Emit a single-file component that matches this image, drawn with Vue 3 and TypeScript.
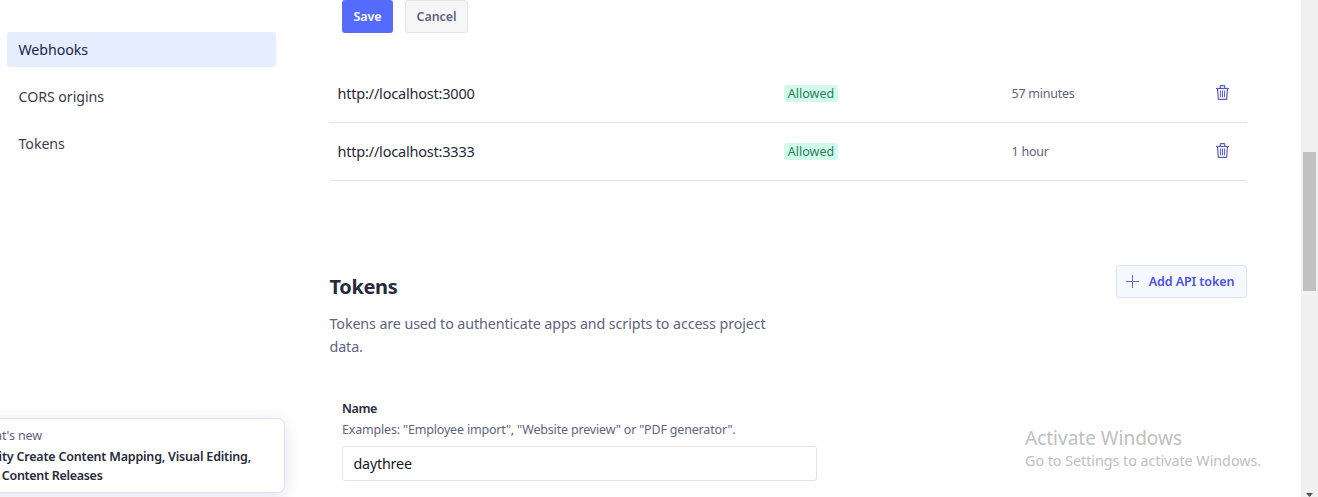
<script setup lang="ts">
interface Origin { url: string; age: string }

const navItems: string[] = ['Webhooks', 'CORS origins', 'Tokens']
const activeItem = 'Webhooks'
const origins: Origin[] = [
  { url: 'http://localhost:3000', age: '57 minutes' },
  { url: 'http://localhost:3333', age: '1 hour' },
]
const tokenName = 'daythree'
</script>

<template>
  <div class="page">
    <nav class="sidebar">
      <a v-for="item in navItems" :key="item" class="nav-item" :class="{ active: item === activeItem }">{{ item }}</a>
    </nav>

    <main class="content">
      <div class="actions">
        <button class="btn primary">Save</button>
        <button class="btn neutral">Cancel</button>
      </div>

      <div class="origins">
        <div v-for="o in origins" :key="o.url" class="row">
          <span class="url">{{ o.url }}</span>
          <span class="status"><span class="badge">Allowed</span></span>
          <span class="age">{{ o.age }}</span>
          <svg class="trash" width="13" height="15" viewBox="0 0 13 15" fill="none" stroke="#5a5cc4">
            <path d="M0 3.5H13" stroke-width="1.2" />
            <path d="M4.3 3V1.2Q4.3 0.6 4.9 0.6H8.1Q8.7 0.6 8.7 1.2V3" stroke-width="1.2" />
            <path d="M1.5 3.8L2.4 14.4H10.6L11.5 3.8" stroke-width="1.2" />
            <path d="M4.3 5.5L4.6 12.3M6.5 5.5V12.3M8.7 5.5L8.4 12.3" stroke-width="1" />
          </svg>
        </div>
      </div>

      <section class="tokens">
        <header class="tokens-head">
          <h2>Tokens</h2>
          <button class="btn add">
            <svg width="13" height="13" viewBox="0 0 13 13" stroke="#6a6cc9" stroke-width="1"><path d="M6.5 0V13M0 6.5H13" /></svg>
            <span>Add API token</span>
          </button>
        </header>
        <p class="intro">Tokens are used to authenticate apps and scripts to access project<br>data.</p>

        <form class="form">
          <label class="label">Name</label>
          <div class="hint">Examples: "Employee import", "Website preview" or "PDF generator".</div>
          <div class="input">{{ tokenName }}</div>
        </form>
      </section>
    </main>

    <div class="scrollbar">
      <div class="thumb"></div>
      <svg class="arrow" width="7" height="4" viewBox="0 0 7 4"><path d="M0 0H7L3.5 4Z" fill="#505050" /></svg>
    </div>

    <aside class="news">
      <div class="news-kicker">What's new</div>
      <div class="news-title">Sanity Create Content Mapping, Visual Editing,</div>
      <div class="news-title second">and Content Releases</div>
    </aside>

    <div class="watermark">
      <div class="wm-title">Activate Windows</div>
      <div class="wm-text">Go to Settings to activate Windows.</div>
    </div>
  </div>
</template>

<style>
body { margin: 0; overflow: hidden; background: #fff; }
</style>

<style scoped>
.page {
  position: relative;
  display: flex;
  width: 1318px;
  height: 497px;
  overflow: hidden;
  background: #fff;
  color: #272a3a;
  font-family: "Noto Sans", "Open Sans", sans-serif;
  white-space: nowrap;
}
* { box-sizing: border-box; }
.sidebar {
  display: flex;
  flex-direction: column;
  gap: 12px;
  width: 276px;
  padding: 32px 0 0 7px;
}
.nav-item {
  height: 35px;
  padding-left: 11.5px;
  border-radius: 3px;
  font-size: 14.2px;
  letter-spacing: -0.05px;
  line-height: 35px;
  color: #3b3d4e;
}
.nav-item.active { background: #e5edff; color: #1b1d4e; }
.content { width: 917px; margin-left: 54px; }
.actions { display: flex; gap: 12px; padding-left: 12px; }
.btn {
  display: flex;
  align-items: center;
  justify-content: center;
  height: 33px;
  padding: 0;
  border: 1px solid transparent;
  border-radius: 3px;
  font-family: inherit;
  font-size: 12.5px;
  font-weight: 600;
  letter-spacing: -0.08px;
}
.primary { width: 51px; background: #556bfc; color: #fff; }
.neutral { width: 63px; background: #f6f6f8; border-color: #e3e4e8; color: #5f6380; }
.origins { margin-top: 32px; }
.row {
  display: grid;
  grid-template-columns: 446.5px 227.5px 204px 13px;
  align-items: center;
  height: 58px;
  padding-left: 7.5px;
  border-bottom: 1px solid #e3e4e8;
}
.url { padding-bottom: 2px; font-size: 14.5px; letter-spacing: -0.2px; }
.status { display: flex; }
.badge {
  width: 54px;
  height: 17px;
  border-radius: 3px;
  background: #d2faea;
  color: #2d8060;
  font-size: 12.5px;
  line-height: 17px;
  text-align: center;
}
.age { font-size: 12.5px; letter-spacing: -0.25px; color: #5f6380; }
.trash { margin-bottom: 2px; }
.tokens { padding-top: 84px; }
.tokens-head { display: flex; justify-content: space-between; height: 33px; }
h2 { margin: 7px 0 0 -0.5px; font-size: 20px; line-height: 30px; font-weight: 700; letter-spacing: -0.35px; }
.add { width: 131px; gap: 10px; padding-right: 3px; background: #f6f9ff; border-color: #d9e3ff; color: #4d4fe0; }
.intro { margin: 14px 0 0 -0.5px; font-size: 14.3px; letter-spacing: -0.11px; line-height: 23px; color: #5f6380; }
.form { padding: 40px 0 0 12px; }
.label { display: block; font-size: 12.5px; line-height: 21px; font-weight: 600; letter-spacing: -0.4px; }
.hint { font-size: 12.5px; letter-spacing: -0.18px; line-height: 21px; color: #5f6380; }
.input {
  width: 475px;
  height: 35px;
  margin-top: 6px;
  padding-left: 10.5px;
  border: 1px solid #e3e4e8;
  border-radius: 3px;
  font-size: 14.3px;
  letter-spacing: -0.2px;
  line-height: 33px;
  color: #15161f;
}
.scrollbar {
  display: flex;
  flex-direction: column;
  justify-content: space-between;
  width: 17px;
  margin-left: 54px;
  padding: 152px 2px 0;
  background: #f0f0f0;
}
.thumb { width: 13px; height: 139px; background: #c1c1c1; }
.arrow { margin-left: 3px; }
.news {
  position: absolute;
  left: -60px;
  top: 418px;
  width: 345px;
  height: 75px;
  padding-top: 7px;
  padding-right: 33px;
  border: 1px solid #dddffa;
  border-radius: 7px;
  background: #fff;
  box-shadow: 0 4px 16px rgba(50, 55, 90, 0.14);
  text-align: right;
  font-size: 12.5px;
}
.news-kicker { line-height: 19px; padding-right: 209px; letter-spacing: -0.1px; color: #5f6380; }
.news-title { padding-top: 1px; line-height: 21px; font-weight: 600; letter-spacing: -0.2px; }
.news-title.second { padding-top: 0; line-height: 18px; padding-right: 148.5px; letter-spacing: -0.3px; }
.watermark { position: absolute; left: 1025px; top: 424px; color: #c0c0c0; }
.wm-title { font-size: 19px; line-height: 28px; }
.wm-text { font-size: 14.3px; line-height: 18px; letter-spacing: -0.02px; }
</style>
